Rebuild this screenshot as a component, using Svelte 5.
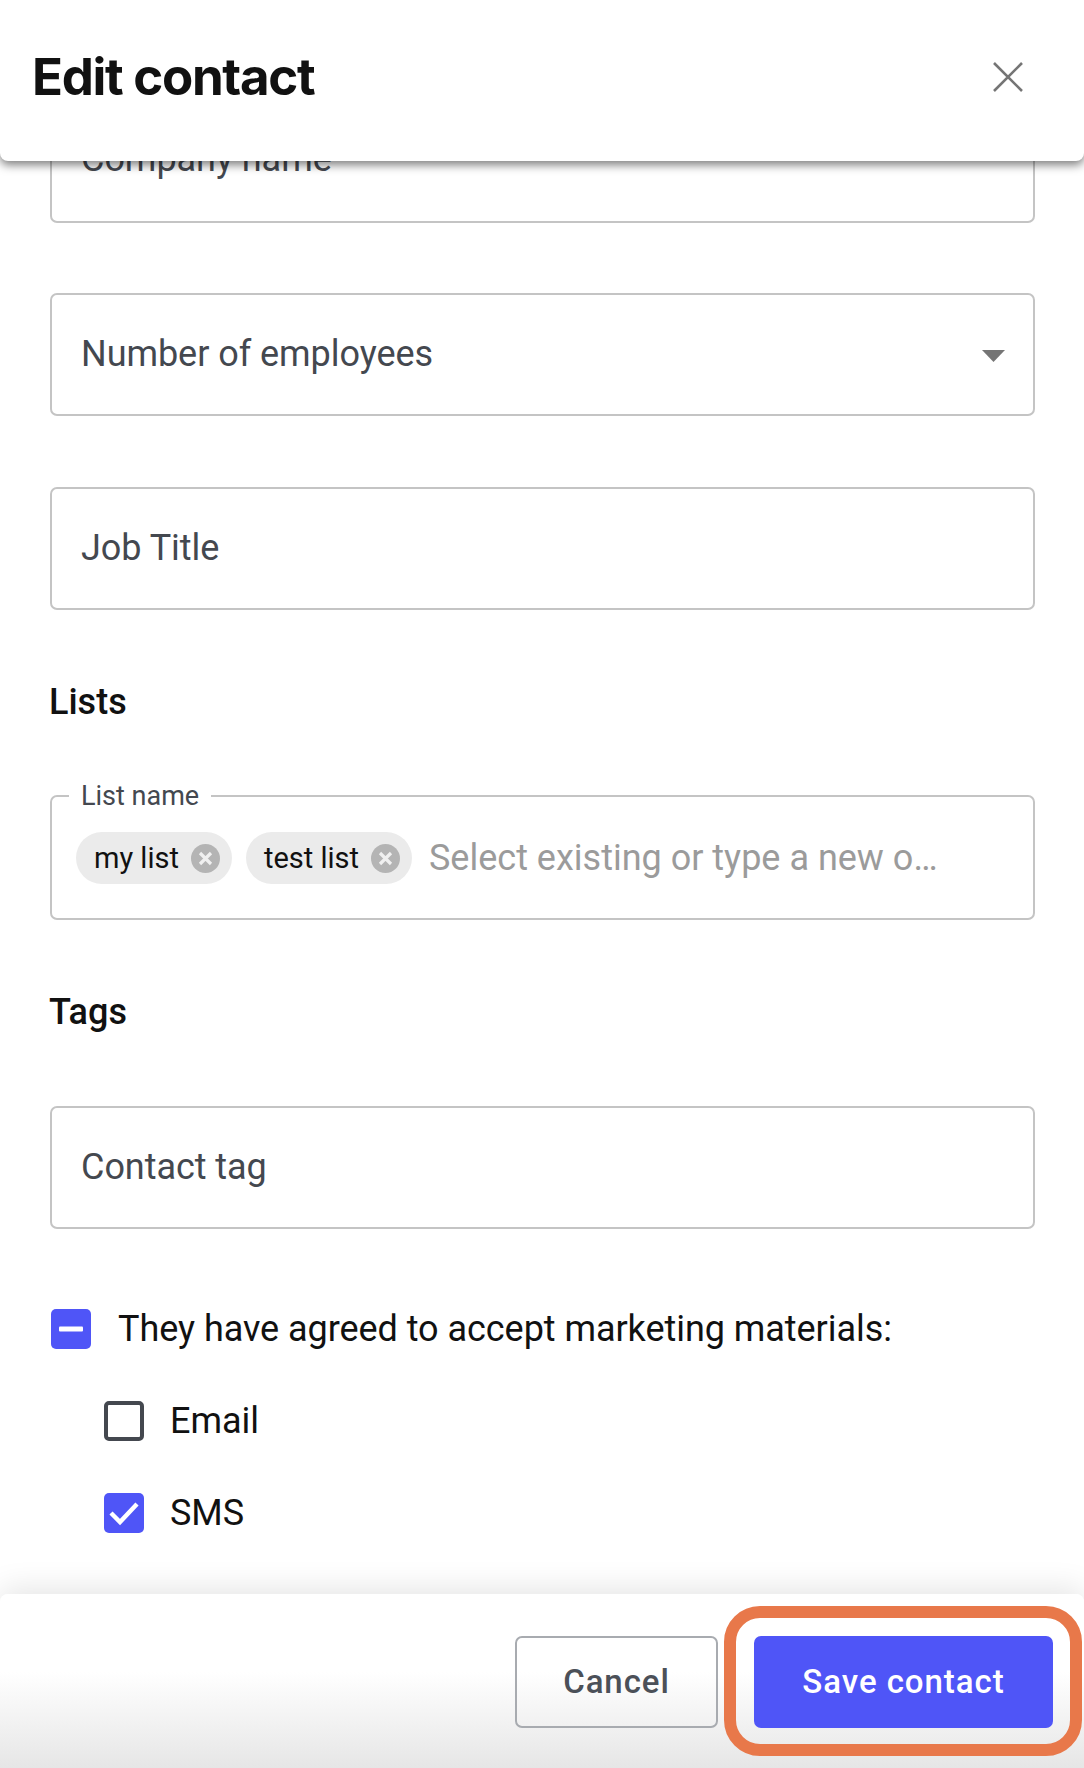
<script>
	const lists = ["my list", "test list"];
</script>

<div class="modal">
	<header class="modal-header">
		<h1>Edit contact</h1>
		<button class="close-btn" aria-label="Close">
			<svg width="32" height="32" viewBox="0 0 32 32" fill="none" stroke="#757575" stroke-width="2.6">
				<path d="M2 2 L30 30 M30 2 L2 30" />
			</svg>
		</button>
	</header>

	<div class="modal-body">
		<div class="form">
			<div class="field company"><span>Company name</span></div>

			<div class="field select">
				<span>Number of employees</span>
				<svg class="caret" width="23" height="12" viewBox="0 0 23 12"><path d="M0 0 H23 L11.5 12 Z" fill="#757575" /></svg>
			</div>

			<div class="field"><span>Job Title</span></div>

			<h2>Lists</h2>
			<fieldset class="list-box">
				<legend>List name</legend>
				{#each lists as name}
					<div class="chip">
						<span>{name}</span>
						<svg width="29" height="29" viewBox="0 0 29 29">
							<circle cx="14.5" cy="14.5" r="14.5" fill="#b4b4b4" />
							<path d="M9 9 L20 20 M20 9 L9 20" stroke="#f0f0f0" stroke-width="3.2" />
						</svg>
					</div>
				{/each}
				<span class="placeholder">Select existing or type a new o…</span>
			</fieldset>

			<h2>Tags</h2>
			<div class="field tag"><span>Contact tag</span></div>

			<div class="check-row parent">
				<span class="box filled">
					<svg width="24" height="6" viewBox="0 0 24 6"><rect width="24" height="5" y="0.5" rx="1" fill="#fff" /></svg>
				</span>
				<span>They have agreed to accept marketing materials:</span>
			</div>
			<div class="check-row child">
				<span class="box empty"></span>
				<span>Email</span>
			</div>
			<div class="check-row child">
				<span class="box filled">
					<svg width="32" height="26" viewBox="0 0 32 26" fill="none" stroke="#fff" stroke-width="4.4"><path d="M3 13 L12 22 L29 4" /></svg>
				</span>
				<span>SMS</span>
			</div>
		</div>
	</div>

	<footer class="modal-footer">
		<button class="btn cancel">Cancel</button>
		<div class="highlight">
			<button class="btn save">Save contact</button>
		</div>
	</footer>
</div>

<style>
	:global(body) {
		margin: 0;
		background: #fff;
	}

	.modal {
		width: 1084px;
		height: 1768px;
		display: flex;
		flex-direction: column;
		overflow: hidden;
		background: #fff;
		font-family: Roboto, "Liberation Sans", sans-serif;
		color: #44484f;
	}

	/* Cabecalho fixo com sombra por cima do formulario */
	.modal-header {
		position: relative;
		z-index: 2;
		flex: none;
		height: 161px;
		box-sizing: border-box;
		padding: 0 60px 8px 32px;
		display: flex;
		align-items: center;
		justify-content: space-between;
		background: #fff;
		border-radius: 0 0 8px 8px;
		box-shadow: 0 4px 10px rgba(0, 0, 0, 0.5);
	}

	h1 {
		margin: 0;
		font-family: Inter, sans-serif;
		font-size: 51px;
		font-weight: 700;
		letter-spacing: -1.3px;
		color: #111;
	}

	.close-btn {
		padding: 0;
		border: none;
		background: none;
		display: flex;
	}

	.modal-body {
		flex: 1;
		min-height: 0;
		overflow: hidden;
		position: relative;
	}

	.form {
		padding: 0 49px 0 50px;
		margin-top: -61px;
	}

	.field {
		height: 123px;
		box-sizing: border-box;
		border: 2px solid #c4c4c4;
		border-radius: 7px;
		padding: 0 29px 2px;
		display: flex;
		align-items: center;
		justify-content: space-between;
		margin-bottom: 71px;
		font-size: 36px;
		letter-spacing: -0.05px;
	}

	.company {
		align-items: flex-start;
		padding-top: 36px;
		margin-bottom: 70px;
	}

	.select .caret {
		margin-right: -1px;
		margin-top: 4px;
	}

	h2 {
		margin: 1px 0 0 -1px;
		height: 42px;
		line-height: 42px;
		font-size: 36px;
		font-weight: 500;
		color: #111;
	}

	.list-box {
		margin: 58px 0 71px;
		padding: 21px 27px 0 24px;
		height: 139px;
		box-sizing: border-box;
		min-width: 0;
		border: 2px solid #c4c4c4;
		border-radius: 7px;
		display: flex;
		align-items: flex-start;
		gap: 14px;
	}

	legend {
		margin-left: -7px;
		padding: 0 12px;
		font-size: 27px;
		line-height: 30px;
	}

	.chip {
		height: 52px;
		box-sizing: border-box;
		padding: 0 12px 0 18px;
		border-radius: 26px;
		background: #ebebeb;
		display: flex;
		align-items: center;
		gap: 12px;
		font-size: 29px;
		color: #111;
	}

	.placeholder {
		margin-left: 3px;
		line-height: 53px;
		font-size: 36px;
		color: #9b9b9b;
		white-space: nowrap;
	}

	h2 + .field {
		margin-top: 73px;
		margin-bottom: 80px;
	}

	/* Checkboxes de consentimento */
	.check-row {
		display: flex;
		align-items: center;
		height: 40px;
		font-size: 36px;
		letter-spacing: -0.05px;
		color: #111;
	}

	.check-row.parent {
		margin-left: 1px;
		gap: 27px;
	}

	.check-row.child {
		margin-top: 52px;
		margin-left: 54px;
		gap: 26px;
	}

	.box {
		flex: none;
		width: 40px;
		height: 40px;
		box-sizing: border-box;
		border-radius: 5px;
		display: flex;
		align-items: center;
		justify-content: center;
	}

	.box.filled {
		background: #4f55f7;
	}

	.box.empty {
		border: 4.5px solid #44484f;
	}

	.modal-footer {
		position: relative;
		flex: none;
		height: 174px;
		box-sizing: border-box;
		padding: 42px 31px 0 0;
		display: flex;
		justify-content: flex-end;
		align-items: flex-start;
		gap: 36px;
		border-radius: 8px 8px 0 0;
		background: linear-gradient(#fff 45%, #e6e6e6);
		box-shadow: 0 -6px 30px rgba(0, 0, 0, 0.1);
	}

	.btn {
		height: 92px;
		box-sizing: border-box;
		padding-bottom: 2px;
		border-radius: 7px;
		font-family: Roboto, sans-serif;
		font-size: 33px;
		font-weight: 500;
		letter-spacing: 0.95px;
	}

	.cancel {
		width: 203px;
		background: transparent;
		border: 2px solid #a8abb0;
		color: #4b5058;
	}

	.highlight {
		position: relative;
		display: flex;
	}

	.save {
		width: 299px;
		border: none;
		background: #4f55f7;
		color: #fff;
	}

	/* Contorno laranja de destaque sobre o botao */
	.highlight::after {
		content: "";
		position: absolute;
		inset: -30px -29px -28px -30px;
		border: 12px solid #e8784a;
		border-radius: 36px;
		pointer-events: none;
	}
</style>
